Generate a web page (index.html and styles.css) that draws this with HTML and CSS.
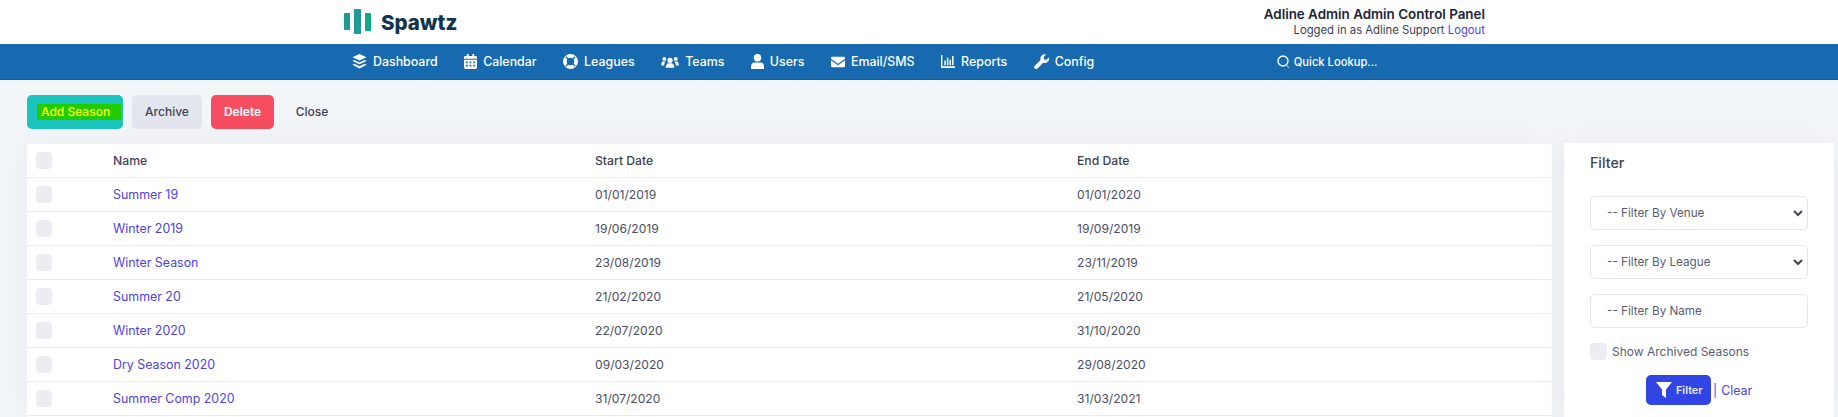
FILE: index.html
```html
<!DOCTYPE html>
<html lang="en">
<head>
<meta charset="utf-8">
<title>Seasons</title>
<link rel="stylesheet" href="styles.css">
</head>
<body>
<header class="top">
  <div class="brand">
    <svg class="mark" width="27" height="25" viewBox="0 0 27 25"><rect x="0" y="4" width="6" height="17" fill="#1f9a96"/><rect x="10" y="0" width="7" height="25" fill="#1f9a96"/><rect x="21" y="4" width="6" height="18" fill="#10ab84"/></svg>
    <span class="brand-name">Spawtz</span>
  </div>
  <div class="account">
    <div class="account-title">Adline Admin Admin Control Panel</div>
    <div class="account-line">Logged in as Adline Support <a class="link" href="#">Logout</a></div>
  </div>
</header>
<nav class="nav">
  <a class="nav-item" href="#"><svg width="15" height="15" viewBox="0 0 16 16"><path d="M8 0l7.500 3.500L8 7 .5 3.500zM2.500 6.500L8 9l5.500-2.500 2 1L8 11 .5 7.500zM2.500 10.500L8 13l5.500-2.500 2 1L8 15.500.5 11.500z" fill="#fff"/></svg>Dashboard</a>
  <a class="nav-item" href="#"><svg width="13" height="15" viewBox="0 0 14 16"><path d="M3 0h2v2h4V0h2v2h1.500A1.500 1.500 0 0 1 14 3.500V5H0V3.500A1.500 1.500 0 0 1 1.500 2H3zM0 6h14v8.500a1.500 1.500 0 0 1-1.500 1.500h-11A1.500 1.500 0 0 1 0 14.500zm2 2v2h2V8zm4 0v2h2V8zm4 0v2h2V8zm-8 3.500v2h2v-2zm4 0v2h2v-2zm4 0v2h2v-2z" fill="#fff" fill-rule="evenodd"/></svg>Calendar</a>
  <a class="nav-item" href="#"><svg width="15" height="15" viewBox="0 0 16 16"><circle cx="8" cy="8" r="6" fill="none" stroke="#fff" stroke-width="4"/><path d="M3 3l3 3M13 3l-3 3M3 13l3-3M13 13l-3-3" stroke="#1769b0" stroke-width="1.400"/></svg>Leagues</a>
  <a class="nav-item" href="#"><svg width="18" height="14" viewBox="0 0 20 16"><circle cx="10" cy="6" r="3" fill="#fff"/><path d="M5 14.500c0-3 2-5 3-5h4c1 0 3 2 3 5z" fill="#fff"/><circle cx="3.500" cy="4.500" r="2.200" fill="#fff"/><circle cx="16.500" cy="4.500" r="2.200" fill="#fff"/><path d="M0 11c0-2 1-3.500 2-3.500h3c-1 1-1.500 2.500-1.800 4.500H0zM20 11c0-2-1-3.500-2-3.500h-3c1 1 1.500 2.500 1.800 4.500H20z" fill="#fff"/></svg>Teams</a>
  <a class="nav-item" href="#"><svg width="13" height="15" viewBox="0 0 14 16"><circle cx="7" cy="4" r="4" fill="#fff"/><path d="M0 16v-3c0-2.500 2-4 3.500-4h7c1.500 0 3.500 1.500 3.500 4v3z" fill="#fff"/></svg>Users</a>
  <a class="nav-item" href="#"><svg width="14" height="14" viewBox="0 0 16 16"><path d="M1.500 2h13A1.500 1.500 0 0 1 16 3.500v.8L8 10 0 4.300v-.8A1.500 1.500 0 0 1 1.500 2zM0 6l8 5.700L16 6v6.500a1.500 1.500 0 0 1-1.500 1.500h-13A1.500 1.500 0 0 1 0 12.500z" fill="#fff"/></svg>Email/SMS</a>
  <a class="nav-item" href="#"><svg width="14" height="13" viewBox="0 0 15 14"><path d="M0 0h1.500v12H15v2H0zM3.500 6h1.600v5H3.500zM6.300 3h1.600v8H6.300zM9.100 5h1.600v6H9.100zM11.900 1h1.600v10h-1.600z" fill="#fff"/></svg>Reports</a>
  <a class="nav-item" href="#"><svg width="15" height="15" viewBox="0 0 16 16"><path d="M15.800 3.600l-2.600 2.600-2.500-.4-.4-2.500L12.900.7a4.500 4.500 0 0 0-5.800 5.700L.6 12.900a2 2 0 0 0 2.800 2.800l6.400-6.500a4.500 4.500 0 0 0 6-5.600z" fill="#fff"/></svg>Config</a>
  <div class="lookup"><svg width="13" height="14" viewBox="0 0 13 14"><circle cx="6" cy="6" r="5" fill="none" stroke="#fff" stroke-width="1.400"/><path d="M9.500 10l2.500 3" stroke="#7fb0d8" stroke-width="1.200"/></svg><span>Quick Lookup...</span></div>
</nav>
<div class="actions">
  <a class="btn btn-add" href="#"><span class="hl">Add Season</span></a>
  <a class="btn btn-archive" href="#">Archive</a>
  <a class="btn btn-delete" href="#">Delete</a>
  <a class="btn btn-close" href="#">Close</a>
</div>
<main class="content">
  <section class="card">
    <div class="row head"><span class="cb"></span><span>Name</span><span>Start Date</span><span>End Date</span></div>
    <div class="row"><span class="cb"></span><a class="link" href="#">Summer 19</a><span class="date">01/01/2019</span><span class="date">01/01/2020</span></div>
    <div class="row"><span class="cb"></span><a class="link" href="#">Winter 2019</a><span class="date">19/06/2019</span><span class="date">19/09/2019</span></div>
    <div class="row"><span class="cb"></span><a class="link" href="#">Winter Season</a><span class="date">23/08/2019</span><span class="date">23/11/2019</span></div>
    <div class="row"><span class="cb"></span><a class="link" href="#">Summer 20</a><span class="date">21/02/2020</span><span class="date">21/05/2020</span></div>
    <div class="row"><span class="cb"></span><a class="link" href="#">Winter 2020</a><span class="date">22/07/2020</span><span class="date">31/10/2020</span></div>
    <div class="row"><span class="cb"></span><a class="link" href="#">Dry Season 2020</a><span class="date">09/03/2020</span><span class="date">29/08/2020</span></div>
    <div class="row"><span class="cb"></span><a class="link" href="#">Summer Comp 2020</a><span class="date">31/07/2020</span><span class="date">31/03/2021</span></div>
  </section>
  <aside class="filter">
    <h2 class="filter-title">Filter</h2>
    <div class="fields">
      <div class="field"><span>-- Filter By Venue</span><svg width="10" height="7" viewBox="0 0 10 7"><path d="M1 1l4 4 4-4" fill="none" stroke="#3f4458" stroke-width="2"/></svg></div>
      <div class="field"><span>-- Filter By League</span><svg width="10" height="7" viewBox="0 0 10 7"><path d="M1 1l4 4 4-4" fill="none" stroke="#3f4458" stroke-width="2"/></svg></div>
      <div class="field"><span>-- Filter By Name</span></div>
    </div>
    <div class="archived"><span class="cb cb-filter"></span><span>Show Archived Seasons</span></div>
    <div class="filter-actions"><a class="btn-filter" href="#"><svg width="16" height="16" viewBox="0 0 16 16"><path d="M0 0h16L10 7.500V16L6 13V7.500z" fill="#fff"/></svg>Filter</a><span class="sep">|</span><a class="link" href="#">Clear</a></div>
  </aside>
</main>
</body>
</html>
```
FILE: styles.css
```css
* { box-sizing: border-box; }
html, body { margin: 0; height: 417px; overflow: hidden; }
body { background: #f3f6f9; font-family: Inter, "Liberation Sans", sans-serif; font-size: 12.4px; color: #4a4d60; }
a { text-decoration: none; }
.link { color: #4e3fe6; }
.top { height: 44px; background: #fff; display: flex; justify-content: space-between; padding: 0 353px 0 344px; }
.brand { display: flex; align-items: center; gap: 10px; }
.mark { display: block; margin-top: -1px; }
.brand-name { font-weight: 800; font-size: 20.5px; color: #12344d; }
.account { text-align: right; padding-top: 5px; }
.account-title { font-size: 13.4px; font-weight: 600; color: #1e2536; line-height: 18px; }
.account-line { font-size: 11.3px; color: #3c4050; line-height: 15px; }
.nav { height: 36px; background: #1769b0; border-bottom: 1px solid #145c9b; display: flex; align-items: center; gap: 26.5px; padding-left: 352px; color: #fff; }
.nav-item { display: flex; align-items: center; gap: 6px; color: #fff; font-size: 12.4px; font-weight: 500; }
.lookup { display: flex; align-items: center; gap: 4px; font-size: 11.2px; font-weight: 500; margin-left: 156px; }
.actions { display: flex; align-items: flex-start; gap: 9px; padding: 15px 0 0 27px; height: 63px; }
.btn { height: 34px; border-radius: 5px; display: flex; align-items: center; justify-content: center; font-size: 12px; font-weight: 500; padding-bottom: 1px; }
.btn-add { width: 96px; background: #1bc5bd; justify-content: flex-start; padding: 0 0 0 10px; }
.hl { background: #22cc00; color: #ffff00; display: block; width: 84px; line-height: 16px; padding-left: 4px; }
.btn-archive { width: 70px; background: #e4e6ef; color: #3f4254; }
.btn-delete { width: 63px; background: #f64e60; color: #fff; font-weight: 600; }
.btn-close { width: 62px; color: #3f4254; margin-left: -2px; }
.content { display: flex; height: 274px; padding-left: 27px; }
.card { width: 1525px; background: #fff; border-top: 1px solid #f0f1f5; box-shadow: 0 0 30px 0 rgba(82, 63, 105, .06); }
.row { display: grid; grid-template-columns: 86px 482px 482px 1fr; align-items: center; height: 34px; border-bottom: 1px solid #ebedf3; padding-bottom: 1px; }
.cb { display: block; width: 16px; height: 17px; border-radius: 4px; background: #ebedf3; margin: 1px 0 0 9px; }
.head { color: #3f4254; font-weight: 500; font-size: 12.2px; }
.date { font-size: 12.1px; }
.filter { width: 270px; margin-left: 12px; background: #fff; padding: 0 26px; box-shadow: 0 0 30px 0 rgba(82, 63, 105, .06); }
.filter-title { margin: 10px 0 0; font-size: 14.2px; font-weight: 500; color: #3f4254; line-height: 20px; }
.fields { display: flex; flex-direction: column; gap: 15px; margin-top: 23px; }
.field { height: 34px; border: 1px solid #e4e6ef; border-radius: 5px; display: flex; align-items: center; justify-content: space-between; padding: 0 4px 0 16px; color: #5a5d72; font-size: 11.7px; }
.archived { display: flex; align-items: center; gap: 5px; margin-top: 15px; color: #5a5d72; font-size: 12px; }
.cb-filter { margin: 0; width: 17px; }
.filter-actions { display: flex; align-items: center; margin-top: 15px; padding-left: 56px; }
.btn-filter { display: flex; align-items: center; gap: 4px; width: 65px; height: 30px; background: #3145e4; border-radius: 5px; color: #e8eaff; font-size: 10.8px; font-weight: 600; padding-left: 10px; }
.sep { color: #4e3fe6; margin: 0 4px 0 2px; }
```
